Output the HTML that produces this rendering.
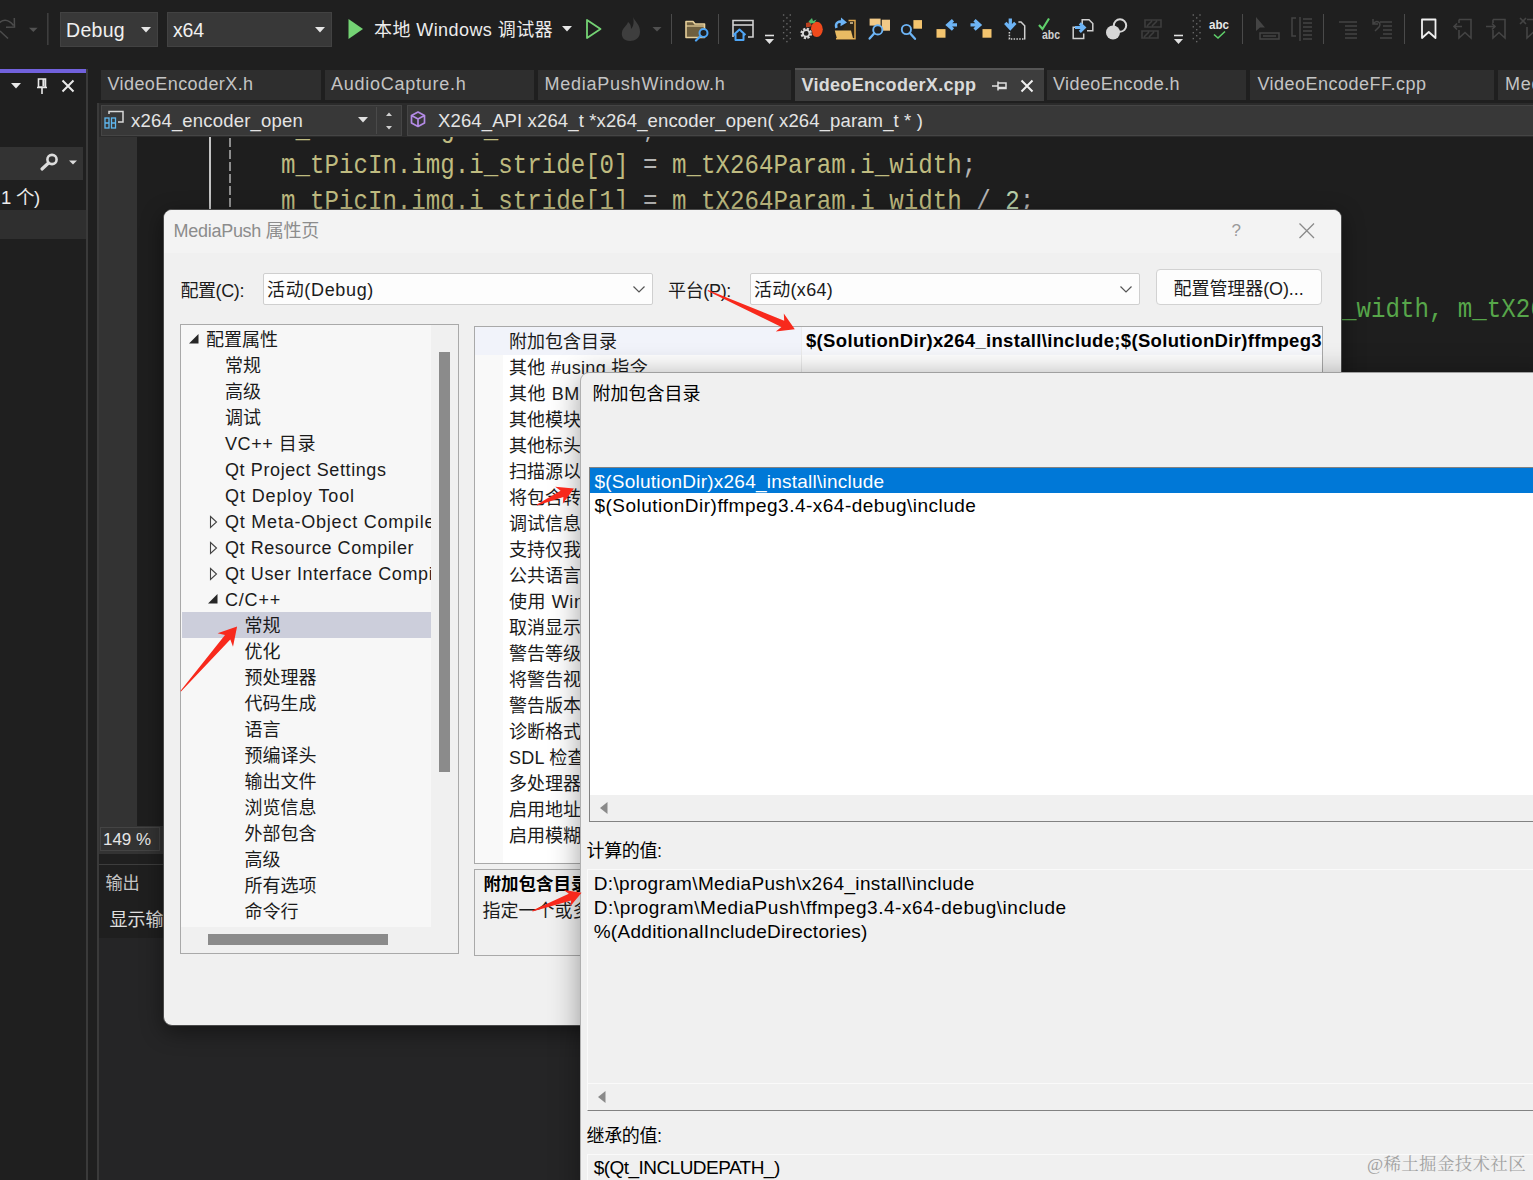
<!DOCTYPE html>
<html lang="zh-CN">
<head>
<meta charset="utf-8">
<title>MediaPush 属性页</title>
<style>
*{box-sizing:border-box;margin:0;padding:0}
html,body{width:1533px;height:1180px;overflow:hidden;background:#1f1f1f}
body{font-family:"Liberation Sans","Noto Sans CJK SC",sans-serif;position:relative;color:#ddd}
.a{position:absolute;white-space:nowrap}
.t{position:absolute;white-space:nowrap;line-height:1}
.k{position:absolute;white-space:nowrap;line-height:1;color:#1b1b1b}
#vs{position:absolute;left:0;top:0;width:1533px;height:1180px;background:#1f1f1f;overflow:hidden}
.combo{background:#383838;border:1px solid #424242}
.tab{position:absolute;top:70px;height:30px;background:#2e2e2e}
.sep{position:absolute;width:1px;background:#4a4a4a;top:14px;height:30px}
.code{position:absolute;left:281px;white-space:pre;font-family:"Liberation Mono",monospace;font-size:28px;line-height:36px;color:#bfbb80;transform:scaleX(.8619);transform-origin:0 0}
.code .g{color:#b4b4b4}.code .n{color:#b5cea8}
.clip{position:absolute;overflow:hidden}
</style>
</head>
<body>
<div id="vs">
<!-- toolbar -->
<svg class="a" style="left:0;top:0" width="60" height="60" viewBox="0 0 60 60">
  <path d="M-2 24.500 C2 19 8 18.500 13.500 25.500 M14.300 18 L14.500 27 L6 27.200 M0 31 L8 38.500" fill="none" stroke="#4c4c4c" stroke-width="1.500"/>
  <path d="M29 27.800 H37.600 L33.300 32Z" fill="#525252"/>
  <rect x="47" y="13" width="1.600" height="32" fill="#3e3e3e"/>
</svg>
<div class="a combo" style="left:60px;top:12px;width:98px;height:35px"></div>
<div class="t" style="left:66px;top:21.05px;font-size:19.5px;color:#f0f0f0;letter-spacing:0.306px;">Debug</div>
<svg class="a" style="left:140px;top:26px" width="12" height="8"><path d="M1 1 H11 L6 6.5Z" fill="#e6e6e6"/></svg>
<div class="a combo" style="left:167px;top:12px;width:165px;height:35px"></div>
<div class="t" style="left:173px;top:21.05px;font-size:19.5px;color:#f0f0f0;letter-spacing:-0.151px;">x64</div>
<svg class="a" style="left:314px;top:26px" width="12" height="8"><path d="M1 1 H11 L6 6.5Z" fill="#e6e6e6"/></svg>
<svg class="a" style="left:346px;top:16px" width="20" height="26"><path d="M2.5 3 L17 13 L2.5 23Z" fill="#74d374"/></svg>
<div class="t" style="left:374px;top:21px;font-size:18px;color:#ececec;letter-spacing:0.426px;">本地 Windows 调试器</div>
<svg class="a" style="left:561px;top:25px" width="12" height="8"><path d="M1 1 H11 L6 6.5Z" fill="#e6e6e6"/></svg>
<svg class="a" style="left:584px;top:16px" width="20" height="26"><path d="M3 4 L16.5 13 L3 22Z" fill="none" stroke="#74d374" stroke-width="1.8" stroke-linejoin="round"/></svg>
<svg class="a" style="left:619px;top:14px" width="26" height="30" viewBox="0 0 26 30"><path d="M14 3 C16 8 21 10 21 18 C21 24 16 27 11 27 C5 27 2 23 3 18 C4 13 8 12 9 8 C12 10 12 13 12 15 C15 12 15 7 14 3Z" fill="#3e3e3e"/></svg>
<svg class="a" style="left:651px;top:26px" width="12" height="8"><path d="M1.5 1 H10.5 L6 5.5Z" fill="#505050"/></svg>
<div class="sep" style="left:671px"></div>
<!-- folder search -->
<svg class="a" style="left:684px;top:18px" width="26" height="24" viewBox="0 0 26 24">
  <path d="M2 3.5 H9 L11 6 H20.5 V19.5 H2Z" fill="#6e5f3f" stroke="#e6cf9a" stroke-width="1.6" stroke-linejoin="round"/>
  <path d="M2 8 H20" stroke="#e6cf9a" stroke-width="1.2"/>
  <circle cx="19.5" cy="15" r="4" fill="#1f1f1f" stroke="#4ea5f5" stroke-width="2"/>
  <path d="M16.5 18 L12 22.5" stroke="#4ea5f5" stroke-width="2.2" stroke-linecap="round"/>
</svg>
<div class="sep" style="left:718px"></div>
<!-- window home -->
<svg class="a" style="left:731px;top:18px" width="26" height="24" viewBox="0 0 26 24">
  <path d="M2 19 V2.5 H22 V19 H17" fill="none" stroke="#d0d0d0" stroke-width="1.6"/>
  <path d="M2 7 H22" stroke="#d0d0d0" stroke-width="1.6"/>
  <path d="M2.5 17 L8.5 11.5 L14.5 17 M4.5 16 V22 H12.5 V16" fill="none" stroke="#4ea5f5" stroke-width="2" stroke-linejoin="round"/>
</svg>
<svg class="a ovf" style="left:764px;top:34px" width="12" height="11"><path d="M1 1.5 H10" stroke="#e0e0e0" stroke-width="1.6"/><path d="M1 5 H10 L5.5 10Z" fill="#e0e0e0"/></svg>
<svg class="a" style="left:0;top:0" width="1533" height="60" viewBox="0 0 1533 60">
<g fill="#686868"><rect x="782.9" y="14.3" width="1.4" height="1.4"/><rect x="789.6" y="14.3" width="1.4" height="1.4"/><rect x="786.2" y="17.2" width="1.4" height="1.4"/><rect x="782.9" y="20.2" width="1.4" height="1.4"/><rect x="789.6" y="20.2" width="1.4" height="1.4"/><rect x="786.2" y="23.1" width="1.4" height="1.4"/><rect x="782.9" y="26.1" width="1.4" height="1.4"/><rect x="789.6" y="26.1" width="1.4" height="1.4"/><rect x="786.2" y="29.0" width="1.4" height="1.4"/><rect x="782.9" y="32.0" width="1.4" height="1.4"/><rect x="789.6" y="32.0" width="1.4" height="1.4"/><rect x="786.2" y="35.0" width="1.4" height="1.4"/><rect x="782.9" y="37.9" width="1.4" height="1.4"/><rect x="789.6" y="37.9" width="1.4" height="1.4"/><rect x="786.2" y="40.9" width="1.4" height="1.4"/></g>
<g fill="#686868"><rect x="1192.6" y="14.3" width="1.4" height="1.4"/><rect x="1199.3" y="14.3" width="1.4" height="1.4"/><rect x="1196.0" y="17.2" width="1.4" height="1.4"/><rect x="1192.6" y="20.2" width="1.4" height="1.4"/><rect x="1199.3" y="20.2" width="1.4" height="1.4"/><rect x="1196.0" y="23.1" width="1.4" height="1.4"/><rect x="1192.6" y="26.1" width="1.4" height="1.4"/><rect x="1199.3" y="26.1" width="1.4" height="1.4"/><rect x="1196.0" y="29.0" width="1.4" height="1.4"/><rect x="1192.6" y="32.0" width="1.4" height="1.4"/><rect x="1199.3" y="32.0" width="1.4" height="1.4"/><rect x="1196.0" y="35.0" width="1.4" height="1.4"/><rect x="1192.6" y="37.9" width="1.4" height="1.4"/><rect x="1199.3" y="37.9" width="1.4" height="1.4"/><rect x="1196.0" y="40.9" width="1.4" height="1.4"/></g>
<ellipse cx="816.8" cy="29.3" rx="6" ry="7.6" fill="#f04a1c"/>
<path d="M806 23 L810 22 L812 26 L806 28Z" fill="#b8401f"/>
<path d="M808.500 21.500 L812 18 L813 21 L816.500 19.500 L814.500 23 L810.500 23.500Z" fill="#4fb86a"/>
<circle cx="806.200" cy="33.400" r="6.300" fill="#1f1f1f"/>
<circle cx="806.200" cy="33.400" r="4.400" fill="none" stroke="#d8d8d8" stroke-width="2.800" stroke-dasharray="2.100 1.350"/>
<circle cx="806.200" cy="33.400" r="3.300" fill="none" stroke="#d8d8d8" stroke-width="1.800"/>
<path d="M848.500 20.500 H855 V38.800 H836" fill="#2b2418" stroke="#e0a84e" stroke-width="1.500"/>
<path d="M850 23 H853" stroke="#f3d9a4" stroke-width="1.400"/>
<path d="M834.800 30.500 H851 L853.200 39 H837Z" fill="#e9bb63"/>
<path d="M836.500 28 C834.500 22 840 20.500 843 22.500" fill="none" stroke="#6db4f5" stroke-width="2.600"/>
<path d="M841 17.600 L847 22.500 L840.500 26.200Z" fill="#6db4f5"/>
<rect x="869.600" y="18.600" width="11" height="7" fill="#f1c987"/><rect x="881.800" y="19.700" width="8.200" height="11" fill="#f1c987"/>
<circle cx="877.800" cy="29.900" r="4.600" fill="#1f1f1f" stroke="#6db4f5" stroke-width="1.900"/>
<path d="M874.300 33.300 L869.600 38.600" stroke="#6db4f5" stroke-width="2.300" stroke-linecap="round"/>
<rect x="913.400" y="20.100" width="8.600" height="8.600" fill="#f3c46e"/>
<circle cx="906.400" cy="29.500" r="4.600" fill="none" stroke="#6db4f5" stroke-width="1.900"/>
<path d="M909.800 33 L915 38.800" stroke="#6db4f5" stroke-width="2.300" stroke-linecap="round"/>
<rect x="936.500" y="29.100" width="9" height="8.600" fill="#f3c46e"/>
<path d="M953 20.300 L947.800 24.900 L953 29.500 M948.500 24.900 H957" fill="none" stroke="#6db4f5" stroke-width="3.300"/>
<rect x="982.500" y="29.100" width="9" height="8.600" fill="#f3c46e"/>
<path d="M974.500 20.300 L979.700 24.900 L974.500 29.500 M979 24.900 H970.500" fill="none" stroke="#6db4f5" stroke-width="3.300"/>
</svg>
<!-- down arrow dotted doc -->
<svg class="a" style="left:1000px;top:8px" width="30" height="42" viewBox="1000 8 30 42">
  <path d="M1005.300 22.800 L1010.300 28.200 L1015.300 22.800 M1010.300 27.500 V18.600" fill="none" stroke="#6db4f5" stroke-width="3.300"/>
  <path d="M1018.400 22 H1021 L1024.700 25.700 V39.500" fill="none" stroke="#d0d0d0" stroke-width="1.500"/>
  <path d="M1009.400 32 V39 H1025" fill="none" stroke="#d0d0d0" stroke-width="1.500" stroke-dasharray="1.500 1.300"/>
</svg>
<!-- check abc -->
<svg class="a" style="left:1037px;top:17px" width="26" height="25" viewBox="0 0 26 25">
  <path d="M2 8 L5.500 12 L12 1.500" fill="none" stroke="#5fcf6a" stroke-width="2.2"/>
  <text x="5" y="22" font-family="Liberation Sans, sans-serif" font-size="12" font-weight="bold" fill="#d0d0d0" textLength="18" lengthAdjust="spacingAndGlyphs">abc</text>
</svg>
<!-- copy w/ arrow -->
<svg class="a" style="left:1068px;top:8px" width="30" height="42" viewBox="1068 8 30 42">
  <path d="M1082.200 24 V19.700 H1089 L1092.800 23.500 V30.800 H1087" fill="none" stroke="#d0d0d0" stroke-width="1.500"/>
  <path d="M1076 27.200 H1073.200 V38.600 H1083.700 V33.500" fill="none" stroke="#d0d0d0" stroke-width="1.500"/>
  <path d="M1079.800 23.300 L1084.300 27.600 L1079.800 31.900 M1083.600 27.600 H1075" fill="none" stroke="#6db4f5" stroke-width="3"/>
</svg>
<!-- circles -->
<svg class="a" style="left:1104px;top:17px" width="26" height="25" viewBox="0 0 26 25">
  <circle cx="16" cy="8.500" r="6.200" fill="none" stroke="#d6d6d6" stroke-width="2"/>
  <circle cx="9" cy="15.500" r="7" fill="#d6d6d6"/>
</svg>
<svg class="a" style="left:1139px;top:17px" width="26" height="25" viewBox="0 0 26 25">
  <path d="M6 3 H22 V10 H6Z M3 14 H19 V21 H3Z M8 9 L13 4 M13 9 L18 4 M5 20 L10 15 M10 20 L15 15" fill="none" stroke="#3d3d3d" stroke-width="1.6"/>
</svg>
<svg class="a ovf" style="left:1173px;top:34px" width="12" height="11"><path d="M1 1.5 H10" stroke="#e0e0e0" stroke-width="1.6"/><path d="M1 5 H10 L5.500 10Z" fill="#e0e0e0"/></svg>
<!-- abc check -->
<svg class="a" style="left:1207px;top:17px" width="26" height="25" viewBox="0 0 26 25">
  <text x="2" y="12" font-family="Liberation Sans, sans-serif" font-size="12.500" font-weight="bold" fill="#e8e8e8" textLength="20" lengthAdjust="spacingAndGlyphs">abc</text>
  <path d="M7 17.500 L11 21 L18 14.500" fill="none" stroke="#5fcf6a" stroke-width="1.6"/>
</svg>
<div class="sep" style="left:1242px"></div>
<svg class="a" style="left:1254px;top:15px" width="28" height="27" viewBox="0 0 28 27">
  <path d="M2 2 V16 L6 12.500 H11Z" fill="#444"/>
  <path d="M6 18 H25 V24 H6Z M9 21 H22" fill="none" stroke="#444" stroke-width="1.5"/>
</svg>
<svg class="a" style="left:1290px;top:15px" width="26" height="27" viewBox="0 0 26 27">
  <path d="M6 3 H2 V21 H6 M10 2 V26 M13 4 H22 M13 8 H22 M13 12 H22 M13 16 H22 M13 20 H22 M13 24 H22" fill="none" stroke="#444" stroke-width="1.5"/>
</svg>
<div class="sep" style="left:1323px"></div>
<svg class="a" style="left:1337px;top:15px" width="24" height="27" viewBox="0 0 24 27">
  <path d="M2 7 H20 M8 11 H20 M8 15 H20 M8 19 H20 M8 23 H20" fill="none" stroke="#444" stroke-width="1.5"/>
</svg>
<svg class="a" style="left:1369px;top:15px" width="26" height="27" viewBox="0 0 26 27">
  <path d="M4 4 V9 H9 M4 9 C8 4 13 8 10 12 L6 16" fill="none" stroke="#444" stroke-width="1.5"/>
  <path d="M11 7 H23 M14 11 H23 M14 15 H23 M14 19 H23 M11 23 H23" fill="none" stroke="#444" stroke-width="1.5"/>
</svg>
<div class="sep" style="left:1404px"></div>
<svg class="a" style="left:1419px;top:16px" width="20" height="26" viewBox="0 0 20 26">
  <path d="M3 3.500 H16.500 V22 L9.750 16 L3 22Z" fill="#2a2a2a" stroke="#f0f0f0" stroke-width="1.8" stroke-linejoin="round"/>
</svg>
<svg class="a" style="left:1451px;top:16px" width="24" height="26" viewBox="0 0 24 26">
  <path d="M8 3.500 H20 V22 L14 16.500 L8 22 V14 M8 7 V3.500 M11 10.500 H3 M6 7.500 L3 10.500 L6 13.500" fill="none" stroke="#444" stroke-width="1.6"/>
</svg>
<svg class="a" style="left:1484px;top:16px" width="24" height="26" viewBox="0 0 24 26">
  <path d="M9 3.500 H21 V22 L15 16.500 L9 22 V14 M9 7 V3.500 M2 10.500 H11 M8 7.500 L11 10.500 L8 13.500" fill="none" stroke="#444" stroke-width="1.6"/>
</svg>
<svg class="a" style="left:1518px;top:16px" width="20" height="26" viewBox="0 0 20 26">
  <path d="M9 3.500 H21 V22 L15 16.500 L9 22 V11 M2 2 L8 8 M8 2 L2 8" fill="none" stroke="#444" stroke-width="1.6"/>
</svg>

<div class="a" style="left:0px;top:69px;width:86px;height:4px;background:#7161dc;"></div>
<div class="a" style="left:0px;top:73px;width:86px;height:1107px;background:#1f1f1f;"></div>
<div class="a" style="left:86px;top:69px;width:2px;height:1111px;background:#3a3a3a;"></div>
<svg class="a" style="left:8px;top:76px" width="76" height="22" viewBox="0 0 76 22">
  <path d="M3 7 H13 L8 12.5Z" fill="#e8e8e8"/>
  <path d="M30.5 3 H37.5 V11 H30.5Z M29 11.5 H39 M34 12 V18" fill="none" stroke="#e8e8e8" stroke-width="1.6"/>
  <path d="M35.5 3 V10" stroke="#e8e8e8" stroke-width="2.2"/>
  <path d="M54.5 4.5 L65.5 15.5 M65.5 4.5 L54.5 15.5" stroke="#e8e8e8" stroke-width="2"/>
</svg>
<div class="a" style="left:0px;top:147px;width:83px;height:33px;background:#333;"></div>
<svg class="a" style="left:38px;top:151px" width="42" height="24" viewBox="0 0 42 24">
  <circle cx="14" cy="8.5" r="4.6" fill="none" stroke="#dcdcdc" stroke-width="2.6"/>
  <path d="M10.5 12 L4 18" stroke="#dcdcdc" stroke-width="3.2" stroke-linecap="round"/>
  <path d="M31 9.5 H39 L35 13.5Z" fill="#dcdcdc"/>
</svg>
<div class="t" style="left:1px;top:189.25px;font-size:18.5px;color:#ececec;letter-spacing:-0.273px;">1 个)</div>
<div class="a" style="left:0px;top:210px;width:86px;height:29px;background:#2f2f2f;"></div>
<div class="a" style="left:97px;top:103px;width:2px;height:1077px;background:#3a3a3a;"></div>
<div class="tab" style="left:101px;width:220px"></div><div class="t" style="left:107.5px;top:75px;font-size:18px;color:#c4c4c4;letter-spacing:0.415px;">VideoEncoderX.h</div>
<div class="tab" style="left:325px;width:209px"></div><div class="t" style="left:331px;top:75px;font-size:18px;color:#c4c4c4;letter-spacing:0.743px;">AudioCapture.h</div>
<div class="tab" style="left:538px;width:253px"></div><div class="t" style="left:544.5px;top:75px;font-size:18px;color:#c4c4c4;letter-spacing:0.759px;">MediaPushWindow.h</div>
<div class="a" style="left:795px;top:68px;width:249px;height:33px;background:#3d3d3d;border-top:2px solid #555;"></div><div class="t" style="left:801.4px;top:75.5px;font-size:18px;color:#dadada;font-weight:bold;letter-spacing:0.311px;">VideoEncoderX.cpp</div>
<svg class="a" style="left:990px;top:76px" width="48" height="20" viewBox="0 0 48 20">
  <path d="M2 10 H8 M8 5.5 V14.5 M8 7 H16 V12.5 H8 M8 11.5 H16" fill="none" stroke="#e0e0e0" stroke-width="1.5"/>
  <path d="M31.5 4.5 L42.5 15.5 M42.5 4.5 L31.5 15.5" stroke="#f0f0f0" stroke-width="2"/>
</svg>
<div class="tab" style="left:1047px;width:199px"></div><div class="t" style="left:1053px;top:75px;font-size:18px;color:#c4c4c4;letter-spacing:0.401px;">VideoEncode.h</div>
<div class="tab" style="left:1250px;width:244px"></div><div class="t" style="left:1257.4px;top:75px;font-size:18px;color:#c4c4c4;letter-spacing:0.483px;">VideoEncodeFF.cpp</div>
<div class="tab" style="left:1498px;width:40px"></div><div class="t" style="left:1505px;top:75px;font-size:18px;color:#c4c4c4;letter-spacing:0.739px;">MediaPushWindow.cpp</div>
<div class="a" style="left:99px;top:103px;width:1434px;height:34px;background:#2b2b2b;"></div>
<div class="a" style="left:101px;top:105px;width:301px;height:31px;background:#383838;border:1px solid #454545;"></div>
<div class="a" style="left:407px;top:105px;width:1130px;height:31px;background:#383838;border:1px solid #454545;"></div>
<svg class="a" style="left:103px;top:109px" width="24" height="22" viewBox="0 0 24 22">
  <path d="M6 5 V2.5 H20 V13 H15" fill="none" stroke="#d8d8d8" stroke-width="1.5"/>
  <rect x="2" y="9" width="4" height="10" fill="none" stroke="#5fb8f0" stroke-width="1.3"/>
  <rect x="8.5" y="9" width="4" height="10" fill="none" stroke="#5fb8f0" stroke-width="1.3"/>
  <path d="M2 14 H6 M8.5 14 H12.5" stroke="#5fb8f0" stroke-width="1.3"/>
</svg>
<div class="t" style="left:131px;top:112.05px;font-size:18.5px;color:#e4e4e4;letter-spacing:0.193px;">x264_encoder_open</div>
<svg class="a" style="left:357px;top:116px" width="12" height="8"><path d="M1 1 H11 L6 6.5Z" fill="#e0e0e0"/></svg>
<div class="a" style="left:376px;top:107px;width:1px;height:27px;background:#4a4a4a;"></div>
<svg class="a" style="left:384px;top:110px" width="10" height="22"><path d="M2 6 H8 L5 2.5Z M2 16 H8 L5 19.5Z" fill="#d0d0d0"/></svg>
<svg class="a" style="left:409px;top:110px" width="20" height="20" viewBox="0 0 20 20">
  <path d="M9 2 L15.5 5.5 V13 L9 16.5 L2.5 13 V5.5Z M2.5 5.5 L9 9 L15.5 5.5 M9 9 V16.5" fill="none" stroke="#b48be6" stroke-width="1.7" stroke-linejoin="round"/>
</svg>
<div class="t" style="left:438px;top:112.05px;font-size:18.5px;color:#e4e4e4;letter-spacing:0.130px;">X264_API x264_t *x264_encoder_open( x264_param_t * )</div>
<div class="clip" style="left:99px;top:137px;width:1434px;height:689px;background:#1e1e1e">
<div class="a" style="left:0px;top:0px;width:38px;height:689px;background:#333;"></div>
<div class="a" style="left:110px;top:0px;width:2px;height:80px;background:#c4c4c4;"></div>
<div class="a" style="left:130px;top:0px;width:2px;height:80px;background:repeating-linear-gradient(to bottom,transparent 0 1.5px,#8e8e8e 1.5px 10.5px,transparent 10.5px 12px);"></div>
<div class="code" style="left:182px;top:-25.5px">m_tPicIn.img.i_stride <span class="g">=</span> <span class="n">0</span><span class="g">,</span></div>
<div class="code" style="left:182px;top:10.5px">m_tPicIn.img.i_stride[0] <span class="g">=</span> m_tX264Param.i_width<span class="g">;</span></div>
<div class="code" style="left:182px;top:46.5px">m_tPicIn.img.i_stride[1] <span class="g">=</span> m_tX264Param.i_width <span class="g">/</span> <span class="n">2</span><span class="g">;</span></div>
<div class="code" style="left:1243px;top:154.5px;color:#57a64a">_width, m_tX264Param.i_height</div>
</div>
<div class="a" style="left:99px;top:826px;width:1434px;height:28px;background:#262626;"></div>
<div class="a" style="left:99px;top:826px;width:1434px;height:28px;background:#333;"></div><div class="a" style="left:100px;top:827px;width:60px;height:24px;background:#333;border:1px solid #444;"></div>
<div class="t" style="left:103px;top:831px;font-size:17px;color:#e6e6e6;letter-spacing:-0.041px;">149 %</div>
<div class="a" style="left:99px;top:854px;width:1434px;height:10px;background:#1f1f1f;"></div>
<div class="a" style="left:99px;top:864px;width:1434px;height:316px;background:#252526;border-top:1px solid #3d3d3d;"></div>
<div class="a" style="left:99px;top:865px;width:1434px;height:73px;background:#1f1f1f;"></div>
<div class="t" style="left:105.4px;top:874.8px;font-size:17.2px;color:#c4c4c4;">输出</div>
<div class="t" style="left:109.5px;top:910.7px;font-size:18px;color:#e0e0e0;">显示输出来源</div>
</div>
<div class="a" style="left:163px;top:209px;width:1179px;height:817px;background:#f0f0f0;border:1px solid #4a4a4a;border-radius:9px;overflow:hidden;box-shadow:0 6px 22px rgba(0,0,0,.45);color:#1b1b1b">
<div class="a" style="left:0px;top:0px;width:1177px;height:43px;background:#f3f3f3;"></div>
<div class="t" style="left:9.6px;top:12px;font-size:18px;color:#8c8c8c;letter-spacing:-0.289px;">MediaPush 属性页</div>
<div class="t" style="left:1067.5px;top:12px;font-size:17px;color:#9a9a9a;">?</div>
<svg class="a" style="left:1133.5px;top:11.5px" width="18" height="18"><path d="M1.5 1.500 L16 16 M16 1.500 L1.500 16" stroke="#8a8a8a" stroke-width="1.300"/></svg>
<div class="k" style="left:16.4px;top:71.7px;font-size:18px;color:#1b1b1b;letter-spacing:-0.400px;">配置(C):</div>
<div class="a" style="left:99px;top:63px;width:390px;height:32px;background:#fdfdfd;border:1px solid #cfcfcf;border-radius:2px;"></div>
<div class="k" style="left:103px;top:70.5px;font-size:18px;color:#1b1b1b;letter-spacing:0.663px;">活动(Debug)</div>
<svg class="a" style="left:468px;top:75px" width="14" height="9"><path d="M1.500 1.500 L7 7 L12.500 1.500" fill="none" stroke="#555" stroke-width="1.200"/></svg>
<div class="k" style="left:504px;top:71.7px;font-size:18px;color:#1b1b1b;letter-spacing:-0.333px;">平台(P):</div>
<div class="a" style="left:586px;top:63px;width:390px;height:32px;background:#fdfdfd;border:1px solid #cfcfcf;border-radius:2px;"></div>
<div class="k" style="left:590px;top:70.5px;font-size:18px;color:#1b1b1b;letter-spacing:0.283px;">活动(x64)</div>
<svg class="a" style="left:955px;top:75px" width="14" height="9"><path d="M1.500 1.500 L7 7 L12.500 1.500" fill="none" stroke="#555" stroke-width="1.200"/></svg>
<div class="a" style="left:992px;top:59px;width:166px;height:36px;background:#fdfdfd;border:1px solid #d2d2d2;border-radius:4px;"></div>
<div class="k" style="left:1009.6px;top:69.8px;font-size:18px;color:#1b1b1b;letter-spacing:-0.091px;">配置管理器(O)...</div>
<div class="clip" style="left:16px;top:114px;width:279px;height:630px;border:1px solid #a9a9a9;background:#f0f0f0">
<div class="clip" style="left:0;top:0;width:250px;height:602px;background:#f7f7f7">
<div class="a" style="left:1px;top:287.4px;width:249px;height:25.6px;background:#cccedb;"></div>
<div class="k" style="left:25px;top:6px;font-size:18px;">配置属性</div>
<svg class="a" style="left:7px;top:8px" width="12" height="12"><path d="M10.500 1 V10.500 H1Z" fill="#262626"/></svg>
<div class="k" style="left:44px;top:32px;font-size:18px;">常规</div>
<div class="k" style="left:44px;top:58px;font-size:18px;">高级</div>
<div class="k" style="left:44px;top:84px;font-size:18px;">调试</div>
<div class="k" style="left:44px;top:110px;font-size:18px;letter-spacing:0.567px;">VC++ 目录</div>
<div class="k" style="left:44px;top:136px;font-size:18px;letter-spacing:0.606px;">Qt Project Settings</div>
<div class="k" style="left:44px;top:162px;font-size:18px;letter-spacing:0.876px;">Qt Deploy Tool</div>
<div class="k" style="left:44px;top:188px;font-size:18px;letter-spacing:0.779px;">Qt Meta-Object Compiler</div>
<svg class="a" style="left:27.5px;top:190px" width="10" height="14"><path d="M1.500 1.500 L7.500 7 L1.500 12.500Z" fill="none" stroke="#444" stroke-width="1.100"/></svg>
<div class="k" style="left:44px;top:214px;font-size:18px;letter-spacing:0.547px;">Qt Resource Compiler</div>
<svg class="a" style="left:27.5px;top:216px" width="10" height="14"><path d="M1.500 1.500 L7.500 7 L1.500 12.500Z" fill="none" stroke="#444" stroke-width="1.100"/></svg>
<div class="k" style="left:44px;top:240px;font-size:18px;letter-spacing:0.618px;">Qt User Interface Compiler</div>
<svg class="a" style="left:27.5px;top:242px" width="10" height="14"><path d="M1.500 1.500 L7.500 7 L1.500 12.500Z" fill="none" stroke="#444" stroke-width="1.100"/></svg>
<div class="k" style="left:44px;top:266px;font-size:18px;letter-spacing:0.794px;">C/C++</div>
<svg class="a" style="left:26px;top:268px" width="12" height="12"><path d="M10.500 1 V10.500 H1Z" fill="#262626"/></svg>
<div class="k" style="left:63.5px;top:292px;font-size:18px;">常规</div>
<div class="k" style="left:63.5px;top:318px;font-size:18px;">优化</div>
<div class="k" style="left:63.5px;top:344px;font-size:18px;">预处理器</div>
<div class="k" style="left:63.5px;top:370px;font-size:18px;">代码生成</div>
<div class="k" style="left:63.5px;top:396px;font-size:18px;">语言</div>
<div class="k" style="left:63.5px;top:422px;font-size:18px;">预编译头</div>
<div class="k" style="left:63.5px;top:448px;font-size:18px;">输出文件</div>
<div class="k" style="left:63.5px;top:474px;font-size:18px;">浏览信息</div>
<div class="k" style="left:63.5px;top:500px;font-size:18px;">外部包含</div>
<div class="k" style="left:63.5px;top:526px;font-size:18px;">高级</div>
<div class="k" style="left:63.5px;top:552px;font-size:18px;">所有选项</div>
<div class="k" style="left:63.5px;top:578px;font-size:18px;">命令行</div>
</div>
<div class="a" style="left:258.2px;top:27px;width:11px;height:419.5px;background:#8b8b8b;"></div>
<div class="a" style="left:27px;top:609px;width:179.5px;height:11px;background:#8b8b8b;"></div>
</div>
<div class="clip" style="left:310px;top:116px;width:849px;height:538px;border:1px solid #a9a9a9;background:#fff">
<div class="a" style="left:0px;top:0px;width:28px;height:536px;background:#f9f9f9;"></div>
<div class="a" style="left:0px;top:0px;width:326px;height:28px;background:#f1f3fa;"></div>
<div class="a" style="left:327px;top:0px;width:520px;height:28px;background:#f7f8fc;"></div>
<div class="a" style="left:326px;top:0px;width:1px;height:536px;background:#ececec;"></div>
<div class="k" style="left:34px;top:5.8px;font-size:18px;">附加包含目录</div>
<div class="k" style="left:34px;top:31.8px;font-size:18px;letter-spacing:0.329px;">其他 #using 指令</div>
<div class="k" style="left:34px;top:57.8px;font-size:18px;letter-spacing:0.570px;">其他 BMI 目录</div>
<div class="k" style="left:34px;top:83.8px;font-size:18px;">其他模块依赖项</div>
<div class="k" style="left:34px;top:109.8px;font-size:18px;">其他标头单元依赖项</div>
<div class="k" style="left:34px;top:135.8px;font-size:18px;">扫描源以查找模块依赖关系</div>
<div class="k" style="left:34px;top:161.8px;font-size:18px;">将包含转换为导入</div>
<div class="k" style="left:34px;top:187.8px;font-size:18px;">调试信息格式</div>
<div class="k" style="left:34px;top:213.8px;font-size:18px;">支持仅我的代码调试</div>
<div class="k" style="left:34px;top:239.8px;font-size:18px;">公共语言运行时支持</div>
<div class="k" style="left:34px;top:265.8px;font-size:18px;letter-spacing:0.588px;">使用 Windows 运行时扩展</div>
<div class="k" style="left:34px;top:291.8px;font-size:18px;">取消显示启动版权标志</div>
<div class="k" style="left:34px;top:317.8px;font-size:18px;">警告等级</div>
<div class="k" style="left:34px;top:343.8px;font-size:18px;">将警告视为错误</div>
<div class="k" style="left:34px;top:369.8px;font-size:18px;">警告版本</div>
<div class="k" style="left:34px;top:395.8px;font-size:18px;">诊断格式</div>
<div class="k" style="left:34px;top:421.8px;font-size:18px;letter-spacing:0.251px;">SDL 检查</div>
<div class="k" style="left:34px;top:447.8px;font-size:18px;">多处理器编译</div>
<div class="k" style="left:34px;top:473.8px;font-size:18px;">启用地址擦除系统</div>
<div class="k" style="left:34px;top:499.8px;font-size:18px;">启用模糊支持(实验性)</div>
<div class="k" style="left:331px;top:5.25px;font-size:18.5px;color:#000;font-weight:bold;letter-spacing:0.330px;">$(SolutionDir)x264_install\include;$(SolutionDir)ffmpeg3</div>
<div class="k" style="left:847.5px;top:5.25px;font-size:18.5px;color:#000;font-weight:bold;">.4-x64-debug\include;%(AdditionalIncludeDirectories)</div>
</div>
<div class="clip" style="left:310px;top:658.5px;width:849px;height:87px;border:1px solid #a9a9a9;background:#f0f0f0">
<div class="k" style="left:8.5px;top:6.75px;font-size:17.5px;color:#000;font-weight:bold;">附加包含目录</div>
<div class="k" style="left:7.5px;top:32.5px;font-size:18px;">指定一个或多个要添加到包含路径中的目录；当目录不止一个时，请用分号分隔。</div>
</div>
</div>
<div class="a" style="left:580px;top:372px;width:970px;height:830px;background:#f0f0f0;border:1px solid #b0b0b0;border-top-color:#a0a0a0;border-radius:9px 0 0 0;box-shadow:0 4px 30px rgba(0,0,0,.38);color:#000">
<div class="k" style="left:11.5px;top:12px;font-size:18px;color:#000;">附加包含目录</div>
<div class="clip" style="left:8px;top:94px;width:960px;height:355px;border:1px solid #828282;background:#fff">
<div class="a" style="left:0px;top:0px;width:958px;height:25px;background:#0078d7;"></div>
<div class="k" style="left:4.4px;top:4.2px;font-size:19px;color:#fff;letter-spacing:0.235px;">$(SolutionDir)x264_install\include</div>
<div class="k" style="left:4.4px;top:28.2px;font-size:19px;color:#000;letter-spacing:0.490px;">$(SolutionDir)ffmpeg3.4-x64-debug\include</div>
<div class="a" style="left:0px;top:326.5px;width:958px;height:30px;background:#f0f0f0;"></div>
<svg class="a" style="left:9px;top:333px" width="10" height="14"><path d="M8.500 1 V13 L1 7Z" fill="#8a8a8a"/></svg>
</div>
<div class="k" style="left:5.6px;top:469px;font-size:18px;color:#000;letter-spacing:-0.403px;">计算的值:</div>
<div class="clip" style="left:6px;top:495.5px;width:960px;height:242px;border-top:1px solid #fafafa;border-left:1px solid #fafafa;border-bottom:1px solid #828282;background:#f0f0f0">
<div class="k" style="left:5.7px;top:4.4px;font-size:19px;color:#000;letter-spacing:0.354px;">D:\program\MediaPush\x264_install\include</div>
<div class="k" style="left:5.7px;top:28.7px;font-size:19px;color:#000;letter-spacing:0.554px;">D:\program\MediaPush\ffmpeg3.4-x64-debug\include</div>
<div class="k" style="left:5.7px;top:52.2px;font-size:19px;color:#000;letter-spacing:0.288px;">%(AdditionalIncludeDirectories)</div>
<div class="a" style="left:0px;top:213.5px;width:958px;height:1px;background:#fafafa;"></div>
<svg class="a" style="left:8.5px;top:220px" width="10" height="14"><path d="M8.500 1 V13 L1 7Z" fill="#8a8a8a"/></svg>
</div>
<div class="k" style="left:5.6px;top:753.5px;font-size:18px;color:#000;letter-spacing:-0.403px;">继承的值:</div>
<div class="clip" style="left:6px;top:781px;width:960px;height:60px;border-top:1px solid #fafafa;border-left:1px solid #fafafa;background:#f0f0f0">
<div class="k" style="left:5.7px;top:3px;font-size:19px;color:#000;letter-spacing:-0.537px;">$(Qt_INCLUDEPATH_)</div>
</div>
</div>
<svg class="a" style="left:0;top:0" width="1533" height="1180" viewBox="0 0 1533 1180"><path d="M707.6 290.9 L781.4 327.1 L775.8 331.6 L794.8 329.2 L783.8 313.5 L784.2 320.7 L708.0 290.1Z" fill="#f8291c"/><path d="M181.0 691.5 L230.3 639.6 L233.0 646.7 L237.1 626.4 L217.6 633.3 L225.0 635.0 L180.4 690.9Z" fill="#f8291c"/><path d="M537.2 505.4 L563.4 497.1 L562.8 503.7 L574.0 488.6 L555.2 486.7 L560.6 490.7 L536.8 504.6Z" fill="#f8291c"/><path d="M532.5 911.4 L571.2 900.4 L570.1 906.4 L581.6 892.8 L564.0 889.9 L568.8 893.8 L532.3 910.6Z" fill="#f8291c"/></svg>
<div class="t" style="left:1367px;top:1155.75px;font-size:17.5px;color:#a2a2a2;font-family:'Liberation Serif','Noto Serif CJK SC',serif;letter-spacing:0.319px;">@稀土掘金技术社区</div>
</body>
</html>
